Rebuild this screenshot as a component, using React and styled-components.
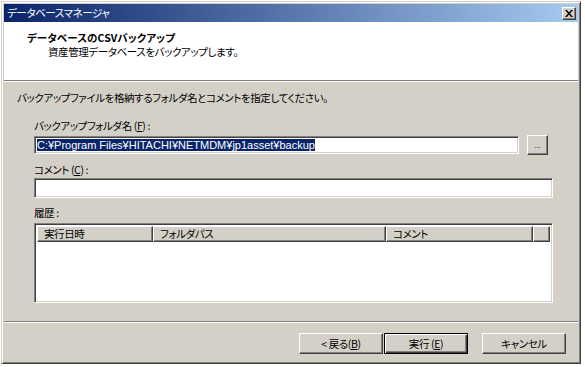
import React from 'react'
import styled, { createGlobalStyle } from 'styled-components'

const GlobalStyle = createGlobalStyle`
  body {
    margin: 0;
    background: #fff;
    font-family: "Noto Sans CJK JP", "Liberation Sans", sans-serif;
    font-size: 10.5px;
    letter-spacing: -0.4px;
    font-feature-settings: "palt";
    color: #000;
  }
  * { box-sizing: border-box; }
`

const raised = `
  border-top: 1px solid #fff;
  border-left: 1px solid #fff;
  border-right: 1px solid #404040;
  border-bottom: 1px solid #404040;
  box-shadow: inset -1px -1px #808080;
`

const sunken = `
  border-top: 1px solid #808080;
  border-left: 1px solid #808080;
  border-right: 1px solid #fff;
  border-bottom: 1px solid #fff;
  box-shadow: inset 1px 1px #404040, inset -1px -1px #d4d0c8;
`

export default function App() {
    return (
        <>
            <GlobalStyle />
            <Window>
                <TitleBar>
                    <TitleText>データベースマネージャ</TitleText>
                    <CloseButton>
                        <svg width="8" height="7" viewBox="0 0 8 7">
                            <path d="M0 0h2l2 2.5L6 0h2L5 3.5 8 7H6L4 4.5 2 7H0l3-3.5z" fill="#000" />
                        </svg>
                    </CloseButton>
                </TitleBar>
                <Header>
                    <HeaderTitle>データベースのCSVバックアップ</HeaderTitle>
                    <HeaderSub>資産管理データベースをバックアップします。</HeaderSub>
                </Header>
                <Rule />
                <Body>
                    <Instruction>バックアップファイルを格納するフォルダ名とコメントを指定してください。</Instruction>
                    <Fields>
                        <Label gap={14}>バックアップフォルダ名 (<u>F</u>) :</Label>
                        <PathRow>
                            <TextBox>
                                <Selected>C:¥Program Files¥HITACHI¥NETMDM¥jp1asset¥backup</Selected>
                            </TextBox>
                            <BrowseButton>...</BrowseButton>
                        </PathRow>
                        <Label gap={8}>コメント (<u>C</u>) :</Label>
                        <CommentBox />
                        <Label gap={8}>履歴 :</Label>
                        <HistoryList>
                            <HeaderRow>
                                <ColHead width={116}>実行日時</ColHead>
                                <ColHead width={233}>フォルダパス</ColHead>
                                <ColHead width={147}>コメント</ColHead>
                                <ColHead grow />
                            </HeaderRow>
                        </HistoryList>
                    </Fields>
                </Body>
                <Rule />
                <Footer>
                    <PushButton>&lt;&nbsp;戻る(<u>B</u>)</PushButton>
                    <PushButton primary>実行 (<u>E</u>)</PushButton>
                    <PushButton spaced>キャンセル</PushButton>
                </Footer>
            </Window>
        </>
    )
}

const Window = styled.div`
    margin: 1px 0 0 1px;
    width: 580px;
    height: 363px;
    padding: 2px;
    background: #d4d0c8;
    border-top: 1px solid #d4d0c8;
    border-left: 1px solid #d4d0c8;
    border-right: 1px solid #404040;
    border-bottom: 1px solid #404040;
    box-shadow: inset 1px 1px #fff, inset -1px -1px #808080;
    display: flex;
    flex-direction: column;
`

const TitleBar = styled.div`
    height: 18px;
    display: flex;
    align-items: center;
    justify-content: space-between;
    padding: 0 2px 0 3px;
    background: linear-gradient(to right, #0a246a, #a6caf0);
`

const TitleText = styled.span`
    color: #fff;
    line-height: 14px;
`

const CloseButton = styled.div`
    width: 14px;
    height: 13px;
    background: #d4d0c8;
    ${raised}
    display: flex;
    align-items: center;
    justify-content: center;
`

const Header = styled.div`
    height: 58px;
    background: #fff;
    padding: 9px 0 0 23px;
    line-height: 14px;
`

const HeaderTitle = styled.div`
    font-weight: bold;
    letter-spacing: 0.1px;
`

const HeaderSub = styled.div`
    padding-left: 21px;
`

const Rule = styled.div`
    height: 2px;
    border-top: 1px solid #808080;
    border-bottom: 1px solid #fff;
    flex-shrink: 0;
`

const Body = styled.div`
    height: 239px;
    padding: 9px 25px 0 13px;
    line-height: 14px;
`

const Instruction = styled.div``

const Fields = styled.div`
    padding-left: 17px;
    display: flex;
    flex-direction: column;
`

const Label = styled.div`
    margin-top: ${p => p.gap}px;
    u { text-decoration-thickness: 1px; }
`

const PathRow = styled.div`
    margin-top: 2px;
    display: flex;
    align-items: center;
    gap: 8px;
    padding-right: 5px;
`

const TextBox = styled.div`
    flex: 1;
    height: 18px;
    background: #fff;
    ${sunken}
    padding: 2px 2px 0 2px;
    font-family: "Liberation Sans", sans-serif;
    font-size: 11px;
    letter-spacing: 0;
    line-height: 13px;
`

const Selected = styled.span`
    background: #0a246a;
    color: #fff;
`

const BrowseButton = styled.div`
    width: 21px;
    height: 20px;
    background: #d4d0c8;
    ${raised}
    font-family: "Liberation Sans", sans-serif;
    font-size: 8px;
    letter-spacing: 0;
    display: flex;
    align-items: center;
    justify-content: center;
    padding-top: 2px;
`

const CommentBox = styled.div`
    margin-top: 1px;
    height: 20px;
    background: #fff;
    ${sunken}
`

const HistoryList = styled.div`
    margin-top: 3px;
    height: 80px;
    background: #fff;
    ${sunken}
    padding: 2px;
`

const HeaderRow = styled.div`
    display: flex;
    height: 16px;
`

const ColHead = styled.div`
    ${p => (p.grow ? 'flex: 1;' : `width: ${p.width}px;`)}
    height: 16px;
    background: #d4d0c8;
    ${raised}
    padding-left: 6px;
    line-height: 13px;
`

const Footer = styled.div`
    flex: 1;
    display: flex;
    justify-content: flex-end;
    align-items: flex-start;
    padding: 10px 12px 0 0;
`

const PushButton = styled.div`
    width: 84px;
    height: 21px;
    margin-left: ${p => (p.spaced ? 14 : 1)}px;
    background: #d4d0c8;
    display: flex;
    align-items: center;
    justify-content: center;
    line-height: 14px;
    ${p =>
        p.primary
            ? `
        border: 1px solid #000;
        box-shadow: inset 1px 1px #fff, inset -1px -1px #404040, inset -2px -2px #808080;
    `
            : raised}
`
